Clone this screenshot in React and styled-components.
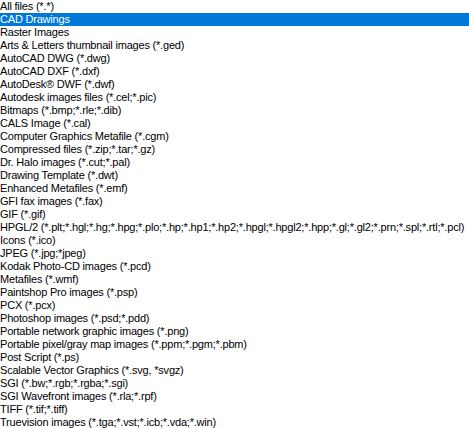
import React from "react";
import styled, { createGlobalStyle } from "styled-components";

const Global = createGlobalStyle`
  html, body { margin: 0; padding: 0; background: #fff; }
  body { overflow: hidden; }
`;

const List = styled.ul`
  list-style: none;
  margin: 0;
  padding: 0;
  width: 469px;
  height: 428px;
  background: #ffffff;
  overflow: hidden;
  font-family: "Liberation Sans", Arial, sans-serif;
  font-size: 11px;
  letter-spacing: -0.2px;
  color: #000;
`;

const Item = styled.li`
  height: 13px;
  line-height: 13px;
  padding-left: 0;
  white-space: nowrap;
  background: ${(p) => (p.$selected ? "#0078d7" : "transparent")};
  color: ${(p) => (p.$selected ? "#ffffff" : "#000000")};
`;

const items = [
  "All files (*.*)",
  "CAD Drawings",
  "Raster Images",
  "Arts & Letters thumbnail images (*.ged)",
  "AutoCAD DWG (*.dwg)",
  "AutoCAD DXF (*.dxf)",
  "AutoDesk® DWF (*.dwf)",
  "Autodesk images files (*.cel;*.pic)",
  "Bitmaps (*.bmp;*.rle;*.dib)",
  "CALS Image (*.cal)",
  "Computer Graphics Metafile (*.cgm)",
  "Compressed files (*.zip;*.tar;*.gz)",
  "Dr. Halo images (*.cut;*.pal)",
  "Drawing Template (*.dwt)",
  "Enhanced Metafiles (*.emf)",
  "GFI fax images (*.fax)",
  "GIF (*.gif)",
  "HPGL/2 (*.plt;*.hgl;*.hg;*.hpg;*.plo;*.hp;*.hp1;*.hp2;*.hpgl;*.hpgl2;*.hpp;*.gl;*.gl2;*.prn;*.spl;*.rtl;*.pcl)",
  "Icons (*.ico)",
  "JPEG (*.jpg;*jpeg)",
  "Kodak Photo-CD images (*.pcd)",
  "Metafiles (*.wmf)",
  "Paintshop Pro images (*.psp)",
  "PCX (*.pcx)",
  "Photoshop images (*.psd;*.pdd)",
  "Portable network graphic images (*.png)",
  "Portable pixel/gray map images (*.ppm;*.pgm;*.pbm)",
  "Post Script (*.ps)",
  "Scalable Vector Graphics (*.svg, *svgz)",
  "SGI (*.bw;*.rgb;*.rgba;*.sgi)",
  "SGI Wavefront images (*.rla;*.rpf)",
  "TIFF (*.tif;*.tiff)",
  "Truevision images (*.tga;*.vst;*.icb;*.vda;*.win)",
];

export default function App() {
  return (
    <>
      <Global />
      <List>
        {items.map((t, i) => (
          <Item key={i} $selected={i === 1}>
            {t}
          </Item>
        ))}
      </List>
    </>
  );
}
